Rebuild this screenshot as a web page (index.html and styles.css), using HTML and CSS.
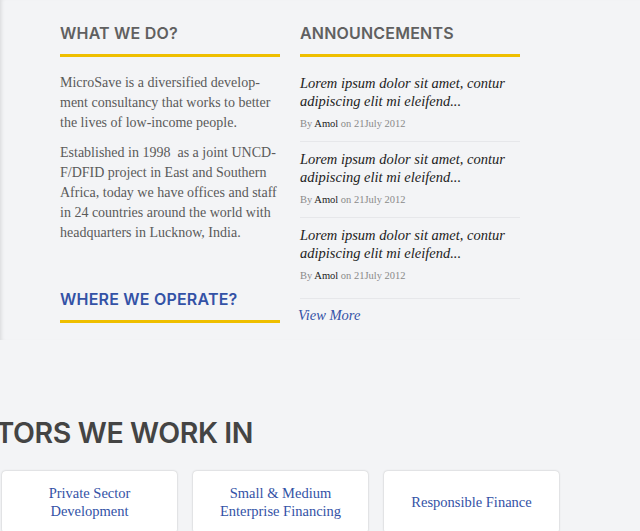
FILE: index.html
```html
<!DOCTYPE html>
<html>
<head>
<meta charset="utf-8">
<link rel="stylesheet" href="styles.css">
</head>
<body>
<div class="top">
  <div class="col">
    <h2 class="heading">WHAT WE DO?</h2>
    <p class="text">MicroSave is a diversified develop-<br>ment consultancy that works to better<br>the lives of low-income people.</p>
    <p class="text">Established in 1998&nbsp; as a joint UNCD-<br>F/DFID project in East and Southern<br>Africa, today we have offices and staff<br>in 24 countries around the world with<br>headquarters in Lucknow, India.</p>
    <h2 class="heading blue operate">WHERE WE OPERATE?</h2>
  </div>
  <div class="col">
    <h2 class="heading">ANNOUNCEMENTS</h2>
    <ul class="news">
      <li class="item">
        <p class="title">Lorem ipsum dolor sit amet, contur<br>adipiscing elit mi eleifend...</p>
        <p class="meta">By <b>Amol</b> on 21July 2012</p>
      </li>
      <li class="item">
        <p class="title">Lorem ipsum dolor sit amet, contur<br>adipiscing elit mi eleifend...</p>
        <p class="meta">By <b>Amol</b> on 21July 2012</p>
      </li>
      <li class="item last">
        <p class="title">Lorem ipsum dolor sit amet, contur<br>adipiscing elit mi eleifend...</p>
        <p class="meta">By <b>Amol</b> on 21July 2012</p>
      </li>
    </ul>
    <a class="more" href="#">View More</a>
  </div>
</div>
<div class="sectors">
  <h2 class="big">SECTORS WE WORK IN</h2>
  <div class="cards">
    <div class="card">Private Sector<br>Development</div>
    <div class="card">Small &amp; Medium<br>Enterprise Financing</div>
    <div class="card">Responsible Finance</div>
  </div>
</div>
</body>
</html>
```
FILE: styles.css
```css
html, body {
  margin: 0;
  padding: 0;
  background: #f3f4f6;
  overflow: hidden;
}
body {
  width: 640px;
  height: 531px;
  font-family: "Liberation Serif", "DejaVu Serif", serif;
}
.top {
  display: flex;
  gap: 20px;
  padding: 23px 0 0 60px;
  height: 317px;
  box-shadow: inset 4px 0 4px -3px rgba(0,0,0,0.12);
}
.col {
  width: 220px;
}
.heading {
  margin: 0;
  font-family: Inter, "Open Sans", sans-serif;
  font-weight: 600;
  font-size: 16px;
  letter-spacing: 0.2px;
  line-height: 20px;
  color: #606060;
  padding-bottom: 11px;
  border-bottom: 3px solid #efbf00;
}
.heading.blue {
  color: #3352a6;
}
.operate {
  margin-top: 46px;
}
.text {
  margin: 16px 0 0;
  font-size: 14px;
  line-height: 20px;
  color: #5a5a5a;
  white-space: nowrap;
}
.text + .text {
  margin-top: 10px;
}
.news {
  list-style: none;
  margin: 17px 0 0;
  padding: 0;
}
.item {
  padding: 0 0 9px;
  border-bottom: 1px solid #e6e7ea;
}
.item + .item {
  padding-top: 8px;
}
.item.last {
  padding-bottom: 14px;
}
.title {
  margin: 0;
  font-style: italic;
  font-size: 14.5px;
  line-height: 18px;
  color: #222;
  white-space: nowrap;
}
.meta {
  margin: 6px 0 0;
  font-size: 10.5px;
  line-height: 16px;
  color: #8a8a8a;
}
.meta b {
  font-weight: normal;
  color: #222;
}
.more {
  display: block;
  margin: 7px 0 0 -2px;
  font-style: italic;
  font-size: 14.5px;
  line-height: 18px;
  color: #3352a6;
  text-decoration: none;
}
.sectors {
  padding-top: 75px;
}
.big {
  margin: 0 0 0 -60px;
  font-family: Inter, "Open Sans", sans-serif;
  font-weight: 600;
  font-size: 28.5px;
  letter-spacing: -0.4px;
  line-height: 36px;
  color: #444;
  white-space: nowrap;
}
.cards {
  display: flex;
  gap: 16px;
  padding: 20px 0 0 2px;
}
.card {
  width: 175px;
  height: 62px;
  flex: none;
  background: #fff;
  border-radius: 4px;
  box-shadow: 0 0 2px rgba(0,0,0,0.25);
  display: flex;
  align-items: center;
  justify-content: center;
  text-align: center;
  font-size: 14.5px;
  line-height: 18px;
  color: #3352a6;
}
```
